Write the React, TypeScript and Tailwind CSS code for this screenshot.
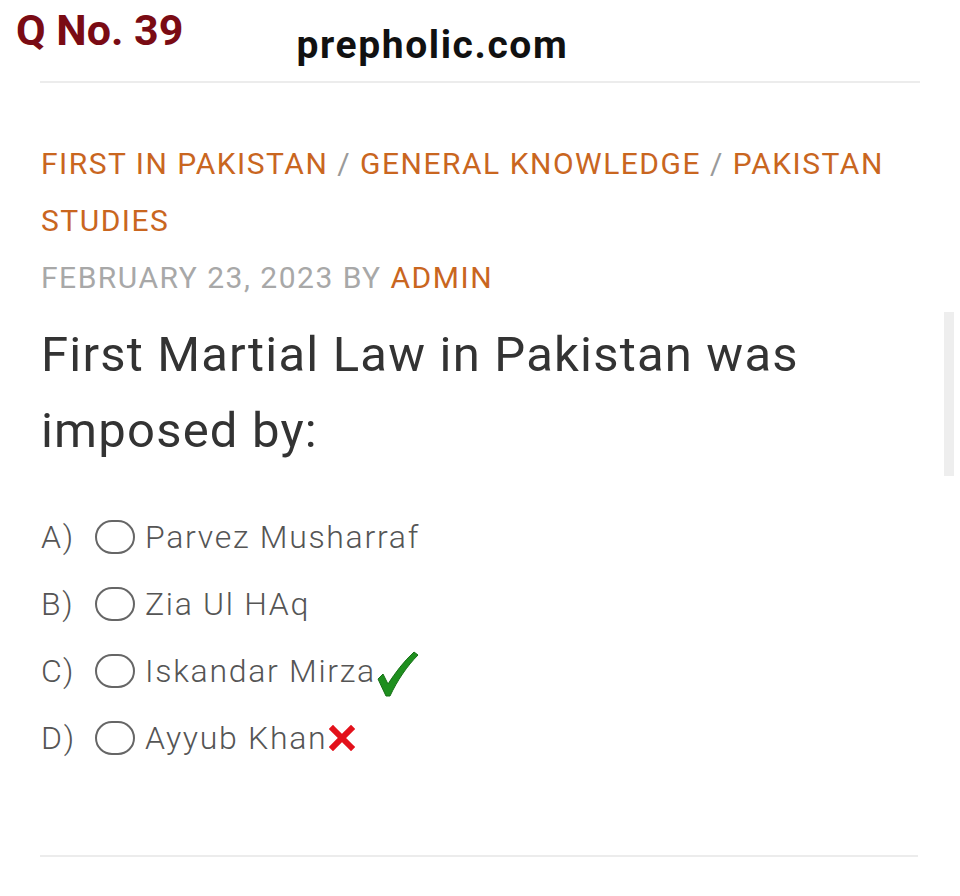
import React from 'react';

const options = [
  { key: 'A)', text: 'Parvez Musharraf', mark: null },
  { key: 'B)', text: 'Zia Ul HAq', mark: null },
  { key: 'C)', text: 'Iskandar Mirza', mark: 'right' },
  { key: 'D)', text: 'Ayyub Khan', mark: 'wrong' },
] as const;

function Tick() {
  return (
    <svg width="42" height="46" viewBox="0 0 42 46" className="-mb-[6px] ml-[1px] inline-block">
      <path
        d="M1 28 L6 23 L11 33 C18 22 27 10 37 1 L41 4 C30 15 20 30 13 45 L9 45 Z"
        fill="#1f8f1f"
        stroke="#167016"
        strokeWidth="1"
        strokeLinejoin="round"
      />
    </svg>
  );
}

function Cross() {
  return (
    <svg width="26" height="26" viewBox="0 0 26 26" className="-mb-[1px] ml-[2px] inline-block">
      <path d="M4 4 L22 22 M22 4 L4 22" stroke="#e3111b" strokeWidth="6" strokeLinecap="square" />
    </svg>
  );
}

export default function App() {
  return (
    <div className="relative min-h-[896px] w-[960px] bg-white font-['Roboto',sans-serif]">
      {/* header */}
      <div className="flex h-[81px] items-start">
        <div className="ml-[16px] mt-[9px] text-[43px] font-bold leading-none text-[#7a0b14]">
          Q No. 39
        </div>
        <div className="ml-[113px] mt-[26px] text-[39px] font-bold leading-none tracking-[1.6px] text-[#111]">
          prepholic.com
        </div>
      </div>
      <div className="mx-[40px] h-[2px] bg-[#ececec]" />

      <div className="px-[41px] pt-[52px]">
        <div className="text-[30px] leading-[57px] tracking-[1.5px] text-[#c9661f]">
          FIRST IN PAKISTAN <span className="text-[#9a9a9a]">/</span> GENERAL KNOWLEDGE{' '}
          <span className="text-[#9a9a9a]">/</span> PAKISTAN STUDIES
        </div>
        <div className="text-[30px] leading-[57px] tracking-[1.5px] text-[#a8a8a8]">
          FEBRUARY 23, 2023 BY <span className="text-[#c9661f]">ADMIN</span>
        </div>

        <h1 className="mt-[11px] text-[49px] font-normal leading-[76px] tracking-[1.2px] text-[#333]">
          First Martial Law in Pakistan was
          <br />
          imposed by:
        </h1>

        <div className="mt-[34px] flex flex-col">
          {options.map((o) => (
            <div key={o.key} className="flex h-[67px] items-center text-[32px] font-light tracking-[1.7px] text-[#555]">
              <span className="w-[54px]">{o.key}</span>
              <span className="mr-[10px] h-[34px] w-[40px] rounded-full border-[2px] border-[#666]" />
              <span>{o.text}</span>
              {o.mark === 'right' && <Tick />}
              {o.mark === 'wrong' && <Cross />}
            </div>
          ))}
        </div>
      </div>

      <div className="absolute left-[40px] right-[42px] top-[855px] h-[2px] bg-[#ececec]" />
      <div className="absolute left-[944px] top-[312px] h-[164px] w-[10px] bg-[#eeeeee]" />
    </div>
  );
}
